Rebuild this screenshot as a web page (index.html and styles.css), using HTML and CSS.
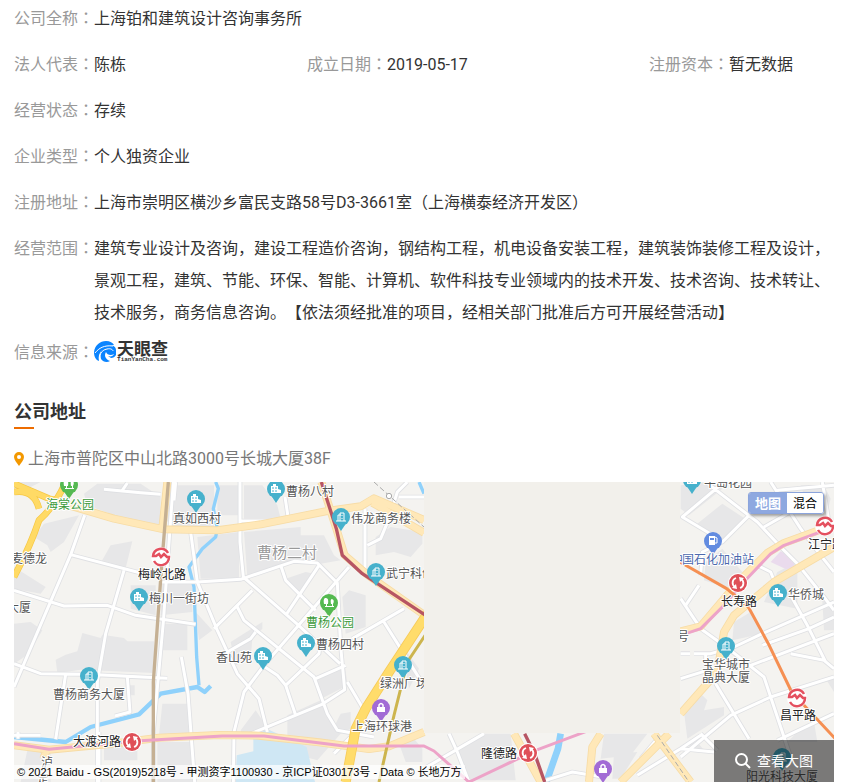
FILE: index.html
```html
<!DOCTYPE html>
<html lang="zh-CN">
<head>
<meta charset="utf-8">
<title>上海铂和建筑设计咨询事务所</title>
<link rel="stylesheet" href="styles.css">
</head>
<body>
<main class="page">
  <dl class="info">
    <div class="field wide"><dt>公司全称<span class="colon" lang="zh-TW">：</span></dt><dd>上海铂和建筑设计咨询事务所</dd></div>
    <div class="field"><dt>法人代表<span class="colon" lang="zh-TW">：</span></dt><dd>陈栋</dd></div>
    <div class="field"><dt>成立日期<span class="colon" lang="zh-TW">：</span></dt><dd>2019-05-17</dd></div>
    <div class="field"><dt>注册资本<span class="colon" lang="zh-TW">：</span></dt><dd>暂无数据</dd></div>
    <div class="field wide"><dt>经营状态<span class="colon" lang="zh-TW">：</span></dt><dd>存续</dd></div>
    <div class="field wide"><dt>企业类型<span class="colon" lang="zh-TW">：</span></dt><dd>个人独资企业</dd></div>
    <div class="field wide"><dt>注册地址<span class="colon" lang="zh-TW">：</span></dt><dd>上海市崇明区横沙乡富民支路58号D3-3661室（上海横泰经济开发区）</dd></div>
    <div class="field wide"><dt>经营范围<span class="colon" lang="zh-TW">：</span></dt><dd>建筑专业设计及咨询，建设工程造价咨询，钢结构工程，机电设备安装工程，建筑装饰装修工程及设计，景观工程，建筑、节能、环保、智能、计算机、软件科技专业领域内的技术开发、技术咨询、技术转让、技术服务，商务信息咨询。【依法须经批准的项目，经相关部门批准后方可开展经营活动】</dd></div>
  </dl>
  <div class="field source">
    <span class="label">信息来源<span class="colon" lang="zh-TW">：</span></span>
    <a class="logo" href="#" aria-label="天眼查">
      <svg class="logo-mark" viewBox="0 0 22 22" aria-hidden="true">
        <path fill="#0a84ff" d="M0 11C1 4 6 0 12 0c4 0 7 2 8 4l-4 0c3 0 6 2 6 5l0 5c-1 2-3 3-5 3l-3-2c3 1 5 0 6-2-3 2-7 1-8-2-2 3-1 7 4 9-3 2-7 1-9-2-1-3-1-6 1-9-3 3-4 7-3 11C2 19 0 16 0 11z"/>
        <path fill="none" stroke="#fff" d="M1 12C5 7 10 4 19 5M7 21c-3-6 0-12 6-13 4-1 6 1 6 2"/>
      </svg>
      <span class="logo-words"><span class="logo-name">天眼查</span><span class="logo-site">TianYanCha.com</span></span>
    </a>
  </div>

  <h2 class="heading">公司地址</h2>
  <p class="address">
    <svg class="pin" viewBox="0 0 10 14" aria-hidden="true"><path fill="#f39800" fill-rule="evenodd" d="M5 0a5 5 0 0 1 5 5c0 3-3 6-5 9C3 11 0 8 0 5a5 5 0 0 1 5-5zm0 3a2 2 0 1 0 0 4 2 2 0 0 0 0-4z"/></svg>
    <span>上海市普陀区中山北路3000号长城大厦38F</span>
  </p>

  <section class="map" aria-label="地图">
    <svg class="tiles" viewBox="14 482 820 300" preserveAspectRatio="xMinYMin slice">
      <defs>
        <g id="drop"><path d="M-4 8L0 14 4 8z"/><circle r="9"/></g>
        <g id="homes"><use href="#drop" fill="#46b1cc"/><path fill="#fff" d="M-5 4V-3h2v-2h3v2h2v3l3 1v3z"/><path stroke="#46b1cc" d="M-4-1h2M-1-1h2M-4 2h2M-1 2h2"/></g>
        <g id="tower"><use href="#drop" fill="#46b1cc"/><path fill="none" stroke="#fff" d="M-5 4H5M-3 4v-6h3M-1 4v-8h4v8M1-2v1M1 1v1"/></g>
        <g id="park"><use href="#drop" fill="#55b951"/><path fill="#fff" d="M-3-5q3 0 2 6h-1v2h5V1H2q-1-5 1-5 3 1 1 5v2h1v1h-9V3h1V1h-2q-1-5 1-6z"/></g>
        <g id="bag"><use href="#drop" fill="#a26bd5"/><path fill="#fff" d="M-4-1h8v5h-8z"/><path fill="none" stroke="#fff" stroke-width="1.5" d="M-2-1v-2q2-3 4 0v2"/></g>
        <g id="fuel"><use href="#drop" fill="#628be0"/><path fill="#fff" fill-rule="evenodd" d="M-4-5h6v9h-6zm1 2v2h4v-2z"/><path fill="none" stroke="#fff" d="M2 2h2v-5l-2-1"/></g>
        <g id="metro"><circle r="10" fill="#fff"/><path fill="none" stroke="#e4505f" stroke-width="2.500" d="M7-4A8 8 0 0 0-8-1h3l3-2 2 3 3-3 3 3h2A8 8 0 0 1-7 4"/></g>
        <g id="change"><circle r="10" fill="#fff"/><circle r="9" fill="#df5058"/><path fill="none" stroke="#fff" stroke-width="1.800" d="M-2-5A5 5 0 0 0-3 4M2 5A5 5 0 0 0 3-4"/><path fill="#fff" d="M-6 5l5 1-1-5zM6-5l-5-1 1 5z"/></g>
        <g id="west-streets"><path d="M212 100L170 218 0 615M170 218l210 55M330 265l-55 190-25 145v300M0 325l150 47 130-2 85 30 180 27M440 300h110l130-8 160-54 70 5 60 60 10 190 12 130-70 45-230 95M530 150l20 150 60 145 60 130 65 75 25 100M678 0v180l10 105 160 140 130 120M678 117h130M813 45l10 65M800 250l15 45 90 90M915 250l-100 150M1005 255L750 550l-60 80-30 120-2 150M715 325L600 440M670 375l20 40 210 170 40 110 30 50 110 20M640 510l70-40 15-20M745 550l45 30 25 30 30 90M815 610l100-95 5-40M905 590l90-40M1000 600l50 85M1110 420l110 175M1015 470l155-90M960 815l45-45 60-50M1053 80v180M1060 190l40-20 25-60 25-80 30-30M1155 45h75M270 22l110 10 60 5M325 25l15-22M485 0l-5 55M0 545l80 30 140 2 240 12M155 577l-30 195M340 585l8 105-45 12M502 525l20 110 20 265M0 760h80M12 750v20M255 750v150M478 0l-30 420-30 330v150"/></g>
        <g id="east-streets"><path d="M900 0L775 105l100 60M845 0l155 120 70 75 50 50 80 100 30 40M975 100l-80 80-60 30-5 70M1020 135l105-60M1060 25l170-15M1195 0l20 120M1040 0l90 140 60 80 40 50M770 350l60 90 90 65 100 80 50 150M825 310l-40 60M810 515h50l70-20 85-40 215-95M770 515h28M980 550l250-95M1015 490l140-50 75-35M1100 340l50 90 55 110M1100 515l100 20 30 25M770 590l80-25M770 825l150-125 120-55 190-60M875 605l100 165M1040 645l60 180M1060 775l170-80M640 880l130-80 60-40M770 800l100 10M830 755l50 50M1000 250l40 20 20 50M845 515v40M75 755l25 55 35 90M0 860l180-105M365 895l80-25 90 15M700 770l-50 60"/></g>
        <g id="avenues"><path d="M165 70l135 40 150 32 160 3 130-18 200-40 100-14 40-24 150 65M1075 62l155 90M922 0l45 140 25 80 70 60 170 120M460 0l-15 140M0 790l105 13 190-18 140-18 180-8 120 2 180 20 150 20 60-8 105-43M98 805l-10 25"/><g transform="translate(1230)"><path d="M1230 195l-180 105-120 100-30 50-20 120-110 125M770 448l60-15 110-130 90-90 50-30 150-55M270 755l80 145M530 755l-25 40-10 105M735 755L590 900M690 755l110 145"/></g></g>
      </defs>
      <path fill="#f4f3f0" d="M0 470h900v400H0z"/>
      <svg x="14" y="482" width="820" height="300" viewBox="0 0 2460 900">
        <g fill="#e7e7e8">
          <path d="M60 165l30-40 105-25-45 80-40 30-10-20zM210 35l40-30h130l60 40v85l-110-20-110-40zM0 0h80l-30 15-50 5zM290 190l65-12-20 80-75-15zM350 310h75v90l-75-20zM0 255l95 60-15 20-80-15zM490 10h110v130H490l-40-30zM0 425l50-5 35 25-40 70-45 30zM205 453l55 15 5-10 65 10 10 10h80v95l-220-10-70 10-5-40 30-15 35-10zM445 300h90v90l-95 10zM445 425h75v80h-75zM545 390l50 55-40 30zM610 10h65v90h-65zM690 10h55l45 60 10 40H690zM550 165l125-15v140H560zM690 150l170-15v25h70l30 60 20 15-60 10-80-5-140 45zM1085 165l45-30 95 15v35l-35 40-50-15-55 10zM985 345l20-20 50 15v95l-60 20zM815 290l60-20 25 5-40 65zM650 480l95-60v20l-30 30-5 60-45 20zM905 590l88-35 8 55-75 38zM820 700l110-50 30 85 20-40 30-5v50l-30 15-70 80-90-25zM680 745l45-60 30 45v30l-70 10zM445 665h85v90l-95 5zM430 780h105v120H430zM270 785h100v50H270zM40 805h70v95H20zM1150 770h50l25 30v40h-50zM1165 490l50 70-30 60zM340 610h22v30h-22z"/>
          <path transform="translate(1230)" d="M770 10l80-10 45 20-100 80-25-20zM820 125l75-60 75 50-70 60zM845 240l50-40 60 70-40 50-75-25zM1060 270l60-30v140l-100-20zM930 420l50-30 35 65-90 20zM1130 10h70l20 40-10 40-60-20zM1195 355l35 5v85h-30zM780 690l45-60 25 25-10 30 60-10v25l-110 70zM100 800l80-45h80l15 140H140zM540 755h130l-50 65-90 10zM570 815l70-5-50 80h-25zM1130 740l40-20 10 60h-90zM1205 590l25-10v50zM780 790l40-10 20 25z"/>
        </g>
        <path fill="#eadbed" d="M2270 240l30-32 40 20v30l-25 3z"/>
        <path fill="#cfe7f4" d="M668 820l50-12V770l40-30 120 55 25 105H665z"/>
        <g fill="none" stroke="#8fd1fb" stroke-linejoin="round">
          <path stroke-width="10" d="M605 0l8 20-15 60 12 60-5 25-40 35-40 55 15 60 8 210 7 85M1215 0l15 35"/>
          <path stroke-width="13" d="M0 765l155 15 75-45 145-38 65-62 110-20 22 15 18-18"/>
          <path stroke-width="20" d="M1640 755l-8 45-35 100"/>
        </g>
        <g class="street-edge"><use href="#west-streets"/><use href="#east-streets" x="1230"/></g>
        <g class="street-fill"><use href="#west-streets"/><use href="#east-streets" x="1230"/></g>
        <use class="avenue-edge" href="#avenues"/>
        <use class="avenue-fill" href="#avenues"/>
        <g fill="none" stroke-linejoin="round">
          <path stroke="#f6c745" stroke-width="20" d="M0 5l105 45 45 10M155 0q-30 70-80 115Q50 190 0 285M0 30q60-10 75 50"/>
          <path stroke="#ffda65" stroke-width="16" d="M0 5l105 45 45 10M155 0q-30 70-80 115Q50 190 0 285M0 30q60-10 75 50"/>
          <path stroke="#f7cb5a" stroke-width="30" d="M1240 395L1125 570l-70 110-30 60-30 160"/>
          <path stroke="#ffdc6b" stroke-width="25" d="M1240 395L1125 570l-70 110-30 60-30 160"/>
          <path stroke="#c5b093" stroke-width="10" d="M463 0l-20 250-25 350v300"/>
          <path stroke="#cdb54e" stroke-width="9" d="M1240 450l-60 90-40 160-45 200"/>
          <path stroke="#aaa" stroke-width="3" stroke-dasharray="16 8" d="M1080 0l150 135M1930 760l95 140"/>
          <path stroke="#eda3c8" stroke-width="9" d="M0 785l105 17 260-25 260-15h125l240 30h240l30 15 105 93 200-95 160-60M2460 135l-150 55-40 25-90 95-50 60-70 70-60 20"/>
          <path stroke="#b75563" stroke-width="10" d="M922 0l45 140 18 80 60 55 190 125M1532 755l30 60 30 85"/>
          <path stroke="#f58f52" stroke-width="9" d="M1998 240l140 80 65 55 60 110 70 145 140 150"/>
        </g>
        <path fill="#f2f0eb" d="M1230 0h768v753h-768z"/>
        <circle cx="1125" cy="42" r="8" fill="#fff" stroke="#aaa" stroke-width="3"/>
      </svg>

      <use href="#park" x="69" y="485"/><use href="#homes" x="196" y="499"/><use href="#homes" x="276" y="489"/>
      <use href="#tower" x="341" y="517"/><use href="#tower" x="376" y="572"/><use href="#park" x="329" y="603"/>
      <use href="#homes" x="139" y="597"/><use href="#homes" x="263" y="656"/><use href="#homes" x="306" y="643"/>
      <use href="#tower" x="89" y="676"/><use href="#tower" x="403" y="665"/><use href="#bag" x="381" y="708"/>
      <use href="#bag" x="603" y="769"/><use href="#homes" x="692" y="480"/><use href="#fuel" x="713" y="541"/>
      <use href="#homes" x="778" y="593"/><use href="#tower" x="726" y="646"/><use href="#tower" x="782" y="757"/>
      <use href="#metro" x="161" y="557"/><use href="#metro" x="825" y="526"/><use href="#metro" x="797" y="698"/>
      <use href="#change" x="132" y="742"/><use href="#change" x="528" y="753"/><use href="#change" x="738" y="583"/>

      <g class="place">
        <text class="green" x="46" y="509">海棠公园</text><text x="173" y="523">真如西村</text><text x="286" y="496">曹杨八村</text>
        <text x="351" y="523">伟龙商务楼</text><text class="area" x="257" y="558">曹杨二村</text>
        <text class="green" x="306" y="627">曹杨公园</text><text x="11" y="563">麦德龙</text><text x="7" y="612">大厦</text>
        <text x="149" y="603">梅川一街坊</text><text x="216" y="662">香山苑</text><text x="316" y="649">曹杨四村</text>
        <text x="53" y="699">曹杨商务大厦</text><text x="352" y="731">上海环球港</text>
        <text class="dark" x="138" y="579">梅岭北路</text><text class="dark" x="73" y="746">大渡河路</text><text class="dark" x="481" y="758">隆德路</text>
        <text x="41" y="767">泸</text><text x="37" y="784">定</text>
        <text x="704" y="487">半岛花园</text><text class="blue" x="682" y="564">国石化加油站</text>
        <text class="dark" x="721" y="606">长寿路</text><text x="788" y="599">华侨城</text><text class="dark" x="808" y="549">江宁路</text>
        <text x="702" y="669">宝华城市</text><text x="702" y="682">晶典大厦</text><text class="dark" x="780" y="720">昌平路</text>
        <text x="746" y="781">阳光科技大厦</text>
      </g>
      <svg class="place" x="374" y="560" width="50" height="140" viewBox="374 560 50 140"><text x="386" y="578">武宁科创</text><text x="380" y="688">绿洲广场</text></svg>
      <svg class="place" x="680" y="550" width="40" height="100" viewBox="680 550 40 100"><text class="blue" x="671" y="564">中</text><text x="677" y="641">号</text></svg>
    </svg>
    <div class="switch"><button type="button" class="active">地图</button><button type="button">混合</button></div>
    <small class="credit">© 2021 Baidu - GS(2019)5218号 - 甲测资字1100930 - 京ICP证030173号 - Data © 长地万方</small>
    <a class="enlarge" href="#"><svg viewBox="0 0 16 16" aria-hidden="true"><circle cx="6.500" cy="6.500" r="5.500"/><path d="M10.500 10.500L15 15"/></svg>查看大图</a>
  </section>
</main>
</body>
</html>
```
FILE: styles.css
```css
* { box-sizing: border-box; }
body {
  margin: 0;
  background: #fff;
  color: #333;
  font: 16px/32px Roboto, "Noto Sans CJK SC", sans-serif;
  text-spacing-trim: space-all;
}
.page { padding: 3px 7px 0 14px; }
.info {
  display: grid;
  grid-template-columns: 293fr 342fr 185fr;
  row-gap: 14px;
  margin: 0;
}
.field { display: flex; }
.wide { grid-column: 1 / -1; }
dt, .label { flex: none; color: #999; }
dd { margin: 0; }
/* full-width colon centred in its cell */
.colon { font-family: "Noto Sans CJK TC", sans-serif; line-height: 1; }
.source { margin-top: 8px; }

.logo {
  display: flex;
  align-items: center;
  gap: 1px;
  height: 30px;
  color: #333;
  text-decoration: none;
}
.logo-mark { width: 22px; height: 22px; }
.logo-words { display: flex; flex-direction: column; }
.logo-name { font-size: 17px; font-weight: 700; line-height: 16px; }
.logo-site { font: bold 6px/6px "Liberation Mono", monospace; }

.heading {
  margin: 28px 0 0;
  font-size: 18px;
  line-height: 30px;
}
.heading::after {
  content: "";
  display: block;
  width: 20px;
  height: 2px;
  background: #ed6c00;
}
.address {
  display: flex;
  align-items: center;
  gap: 4px;
  margin: 14px 0 7px;
  color: #777;
}
.pin { width: 10px; height: 14px; }

.map {
  position: relative;
  height: 300px;
  overflow: hidden;
}
.tiles { display: block; width: 100%; height: 100%; }
.street-edge { fill: none; stroke: #dfe0e3; stroke-width: 14px; stroke-linejoin: round; }
.street-fill { fill: none; stroke: #fff; stroke-width: 9px; stroke-linejoin: round; }
.avenue-edge { fill: none; stroke: #f7dca6; stroke-width: 24px; stroke-linejoin: round; }
.avenue-fill { fill: none; stroke: #ffe8b8; stroke-width: 19px; stroke-linejoin: round; }
.place {
  font-size: 12px;
  fill: #555;
  stroke: #fff;
  stroke-width: 2px;
  stroke-linejoin: round;
  paint-order: stroke;
}
.area { font-size: 15px; fill: #999; }
.green { fill: #3c9a3b; }
.blue { fill: #4c68ad; }
.dark { fill: #222; }

.switch {
  position: absolute;
  top: 10px;
  right: 10px;
  display: flex;
  border: 1px solid #8ba4dc;
  border-radius: 3px;
  overflow: hidden;
  box-shadow: 2px 2px 3px rgba(0, 0, 0, .35);
}
.switch button {
  padding: 0 6px;
  border: 0;
  background: #fff;
  color: #000;
  font: 12px/20px "Noto Sans CJK SC", sans-serif;
}
.switch .active { background: #8ea8e0; color: #fff; font-size: 13px; font-weight: 700; }
.credit {
  position: absolute;
  left: 0;
  bottom: 3px;
  padding: 0 3px;
  background: rgba(255, 255, 255, .7);
  color: #000;
  font: 11px/14px "Liberation Sans", "Noto Sans CJK SC", sans-serif;
}
.enlarge {
  position: absolute;
  right: 0;
  bottom: 0;
  display: flex;
  align-items: center;
  justify-content: center;
  gap: 6px;
  width: 120px;
  height: 42px;
  background: rgba(0, 0, 0, .5);
  color: #fff;
  font-size: 14px;
  text-decoration: none;
}
.enlarge svg { width: 16px; height: 16px; fill: none; stroke: #fff; stroke-width: 2px; }
```
